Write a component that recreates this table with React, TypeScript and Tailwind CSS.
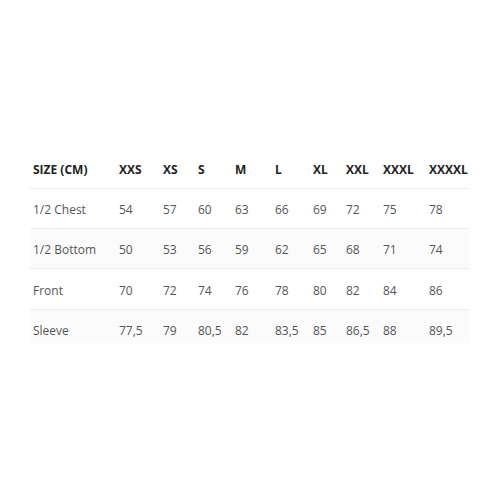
import React from "react";

const widths = ["w-[86px]", "w-[44px]", "w-[35px]", "w-[37px]", "w-[40px]", "w-[38px]", "w-[33px]", "w-[37px]", "w-[46px]", "w-[43px]"];

const header = ["SIZE (CM)", "XXS", "XS", "S", "M", "L", "XL", "XXL", "XXXL", "XXXXL"];
const rows = [
  ["1/2 Chest", "54", "57", "60", "63", "66", "69", "72", "75", "78"],
  ["1/2 Bottom", "50", "53", "56", "59", "62", "65", "68", "71", "74"],
  ["Front", "70", "72", "74", "76", "78", "80", "82", "84", "86"],
  ["Sleeve", "77,5", "79", "80,5", "82", "83,5", "85", "86,5", "88", "89,5"],
];

export default function App() {
  return (
    <div className="w-[500px] h-[500px] bg-white pt-[149px] pl-[30px]" style={{ fontFamily: '"Open Sans", sans-serif' }}>
      <div className="w-[439px] text-[12px]">
        <div className="flex h-[40px] items-center pt-[3px] border-b border-[#ebebeb] font-bold text-[#222]">
          {header.map((h, i) => (
            <div key={i} className={`${widths[i]} pl-[3px] whitespace-nowrap`}>{h}</div>
          ))}
        </div>
        {rows.map((r, ri) => (
          <div
            key={ri}
            className={`flex text-[#555] ${ri === 3 ? "h-[33px] items-start pt-[12px]" : `${ri === 2 ? "h-[41px]" : "h-[40px]"} items-center pt-[3px] border-b border-[#ebebeb]`} ${ri % 2 === 1 ? "bg-[#fbfbfb]" : "bg-white"}`}
          >
            {r.map((c, i) => (
              <div key={i} className={`${widths[i]} pl-[3px] whitespace-nowrap`}>{c}</div>
            ))}
          </div>
        ))}
      </div>
    </div>
  );
}
